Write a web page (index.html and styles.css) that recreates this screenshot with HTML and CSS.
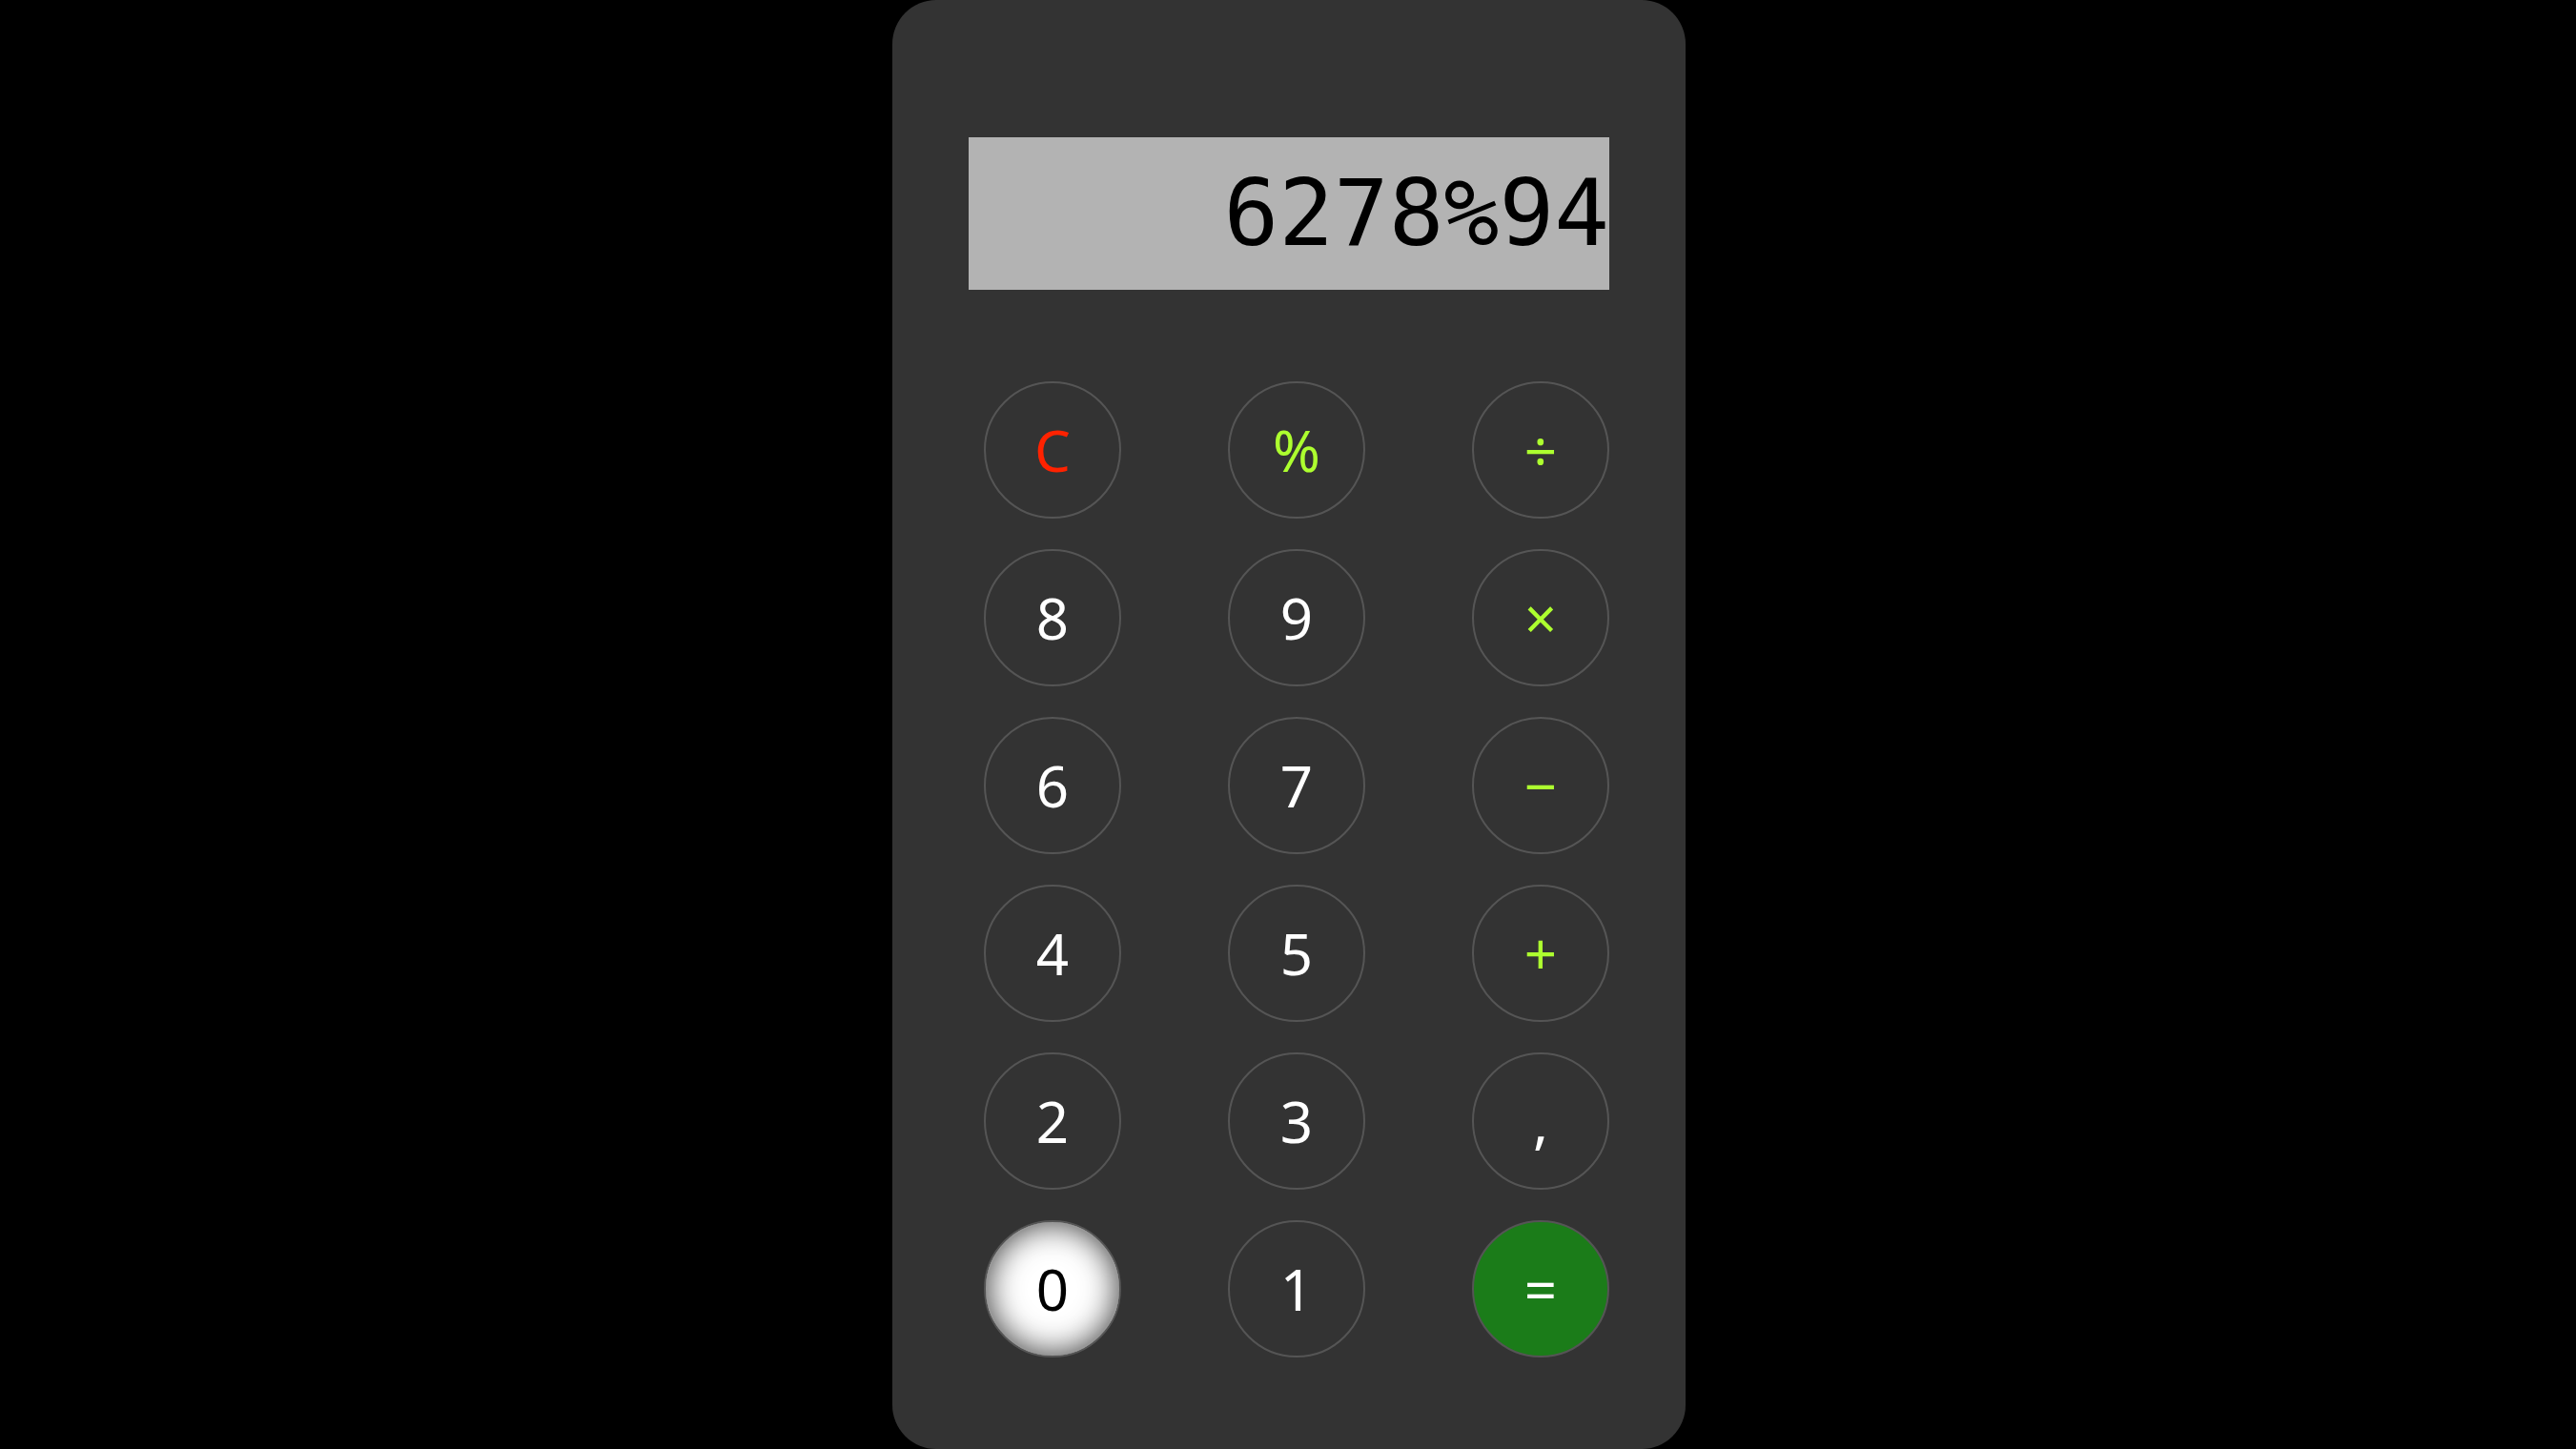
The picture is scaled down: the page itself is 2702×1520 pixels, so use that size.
FILE: index.html
```html
<!DOCTYPE html>
<html lang="en">
<head>
<meta charset="utf-8">
<title>Calculator</title>
<link rel="stylesheet" href="styles.css">
</head>
<body>
<main class="calculator">
  <div class="display"><span class="display-text">6278%94</span></div>
  <div class="keypad">
    <button class="key key-clear">C</button>
    <button class="key key-op">%</button>
    <button class="key key-op">÷</button>
    <button class="key">8</button>
    <button class="key">9</button>
    <button class="key key-op">×</button>
    <button class="key">6</button>
    <button class="key">7</button>
    <button class="key key-op">−</button>
    <button class="key">4</button>
    <button class="key">5</button>
    <button class="key key-op">+</button>
    <button class="key">2</button>
    <button class="key">3</button>
    <button class="key">,</button>
    <button class="key key-active">0</button>
    <button class="key">1</button>
    <button class="key key-equals">=</button>
  </div>
</main>
</body>
</html>
```
FILE: styles.css
```css
html, body {
  margin: 0;
  padding: 0;
  background: #000;
  height: 100%;
}
body {
  display: flex;
  justify-content: center;
  padding-left: 2px;
  box-sizing: border-box;
  font-family: "Noto Sans", "Open Sans", sans-serif;
}
.calculator {
  box-sizing: border-box;
  width: 832px;
  height: 1520px;
  background: #333333;
  border-radius: 46px;
  padding: 144px 80px 96px;
  display: flex;
  flex-direction: column;
}
.display {
  height: 160px;
  background: #b3b3b3;
  display: flex;
  align-items: center;
  justify-content: flex-end;
  overflow: hidden;
}
.display-text {
  font-family: "DejaVu Sans Mono", monospace;
  font-size: 96px;
  line-height: 1;
  color: #000;
}
.keypad {
  margin-top: 96px;
  display: grid;
  grid-template-columns: repeat(3, 144px);
  grid-auto-rows: 144px;
  column-gap: 112px;
  row-gap: 32px;
  justify-content: end;
}
.key {
  box-sizing: border-box;
  width: 144px;
  height: 144px;
  border-radius: 50%;
  border: 2px solid #555555;
  background: transparent;
  color: #ffffff;
  font-family: "Noto Sans", "Open Sans", sans-serif;
  font-size: 60px;
  line-height: 1;
  padding: 0;
  display: flex;
  align-items: center;
  justify-content: center;
}
.key-clear {
  color: #ff2200;
}
.key-op {
  color: #adff2f;
}
.key-equals {
  background: #1b7c19;
  color: #ffffff;
}
.key-active {
  background: #ffffff;
  color: #000000;
  box-shadow: inset 0 0 0 1px #9a9a9a, inset 0 0 34px rgba(0, 0, 0, 0.8);
}
```
